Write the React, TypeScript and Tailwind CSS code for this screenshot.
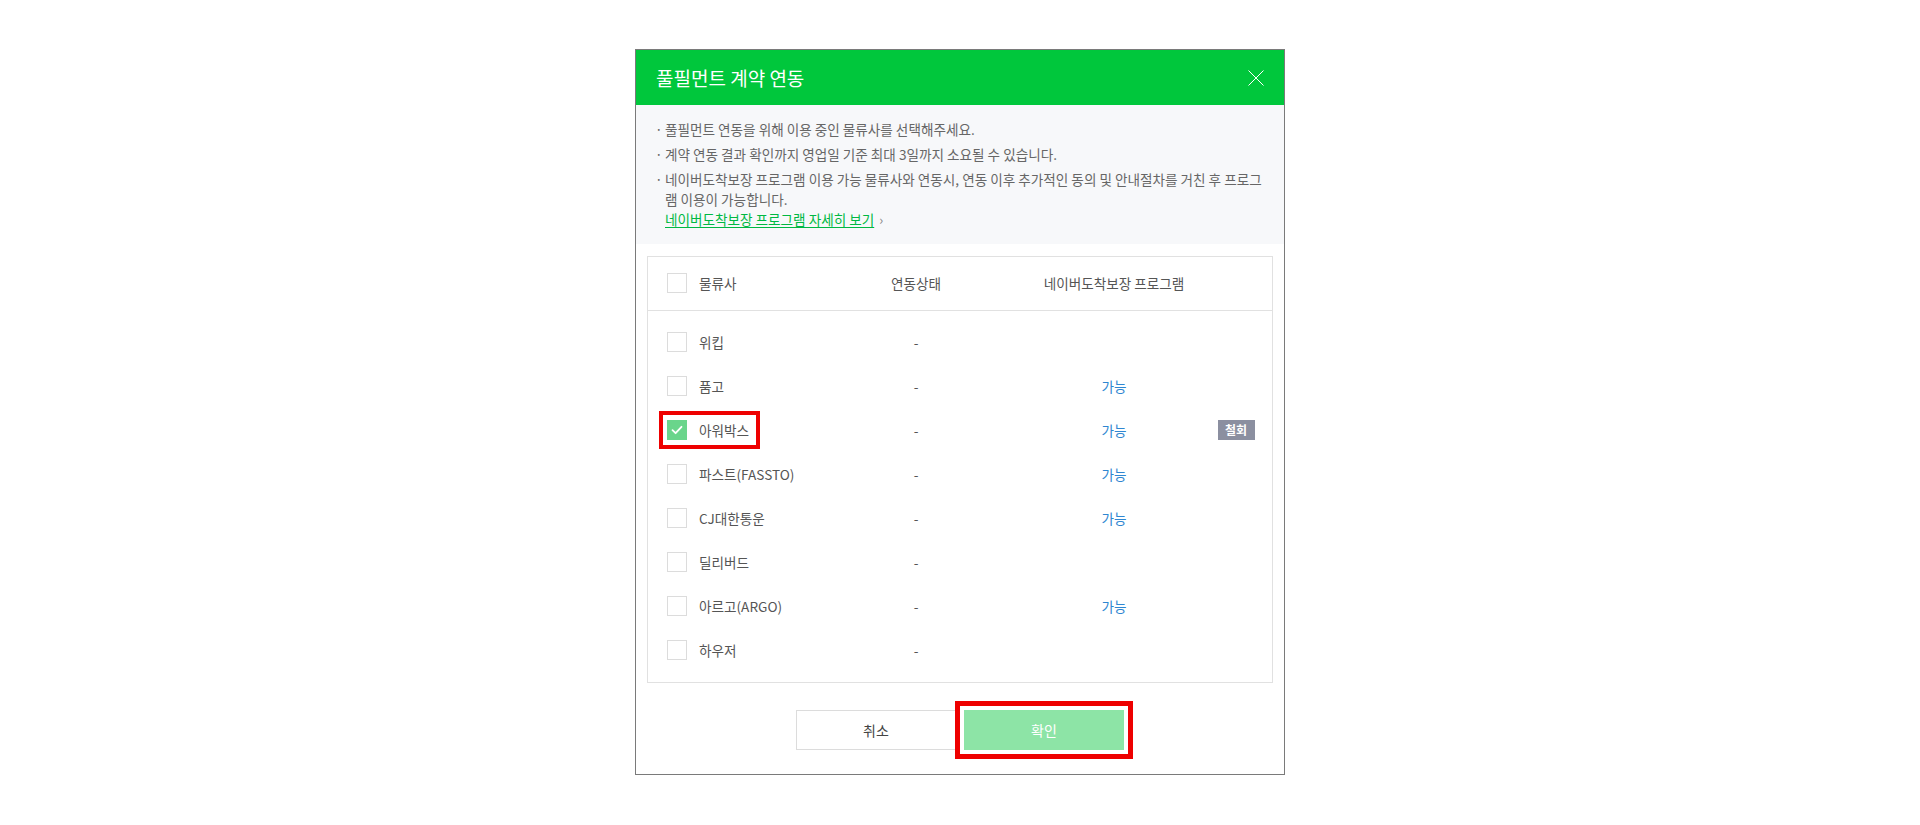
import React, { useState } from 'react';

type Carrier = {
  name: string;
  nda: boolean;
  withdraw?: boolean;
};

const carriers: Carrier[] = [
  { name: '위킵', nda: false },
  { name: '품고', nda: true },
  { name: '아워박스', nda: true, withdraw: true },
  { name: '파스트(FASSTO)', nda: true },
  { name: 'CJ대한통운', nda: true },
  { name: '딜리버드', nda: false },
  { name: '아르고(ARGO)', nda: true },
  { name: '하우저', nda: false },
];

const font = { fontFamily: '"Noto Sans CJK KR", "Noto Sans", sans-serif' };

const CheckBox: React.FC<{ checked: boolean; onClick?: () => void }> = ({ checked, onClick }) => (
  <button
    type="button"
    onClick={onClick}
    className={`w-5 h-5 shrink-0 flex items-center justify-center border ${
      checked ? 'bg-[#6ad58b] border-[#6ad58b]' : 'bg-white border-[#dcdcdc]'
    }`}
  >
    {checked && (
      <svg width="12" height="10" viewBox="0 0 12 10" fill="none">
        <path d="M1.5 5.2L4.6 8.2L10.5 1.8" stroke="white" strokeWidth="1.8" strokeLinecap="round" strokeLinejoin="round" />
      </svg>
    )}
  </button>
);

const App: React.FC = () => {
  const [selected, setSelected] = useState<string[]>(['아워박스']);

  const toggle = (name: string) =>
    setSelected(prev => (prev.includes(name) ? prev.filter(n => n !== name) : [...prev, name]));

  return (
    <div className="min-h-screen bg-white flex justify-center pt-[49px]" style={font}>
      <div className="w-[650px] h-[726px] border border-[#7a7a7a] bg-white flex flex-col">
        {/* Header */}
        <div className="h-[55px] shrink-0 bg-[#00c73c] flex items-center justify-between pl-[20px] pr-[20px]">
          <h2 className="text-[19px] leading-none text-white">풀필먼트 계약 연동</h2>
          <button type="button" className="w-4 h-4">
            <svg width="16" height="16" viewBox="0 0 16 16" fill="none">
              <path d="M0.5 0.5L15.5 15.5M15.5 0.5L0.5 15.5" stroke="white" strokeWidth="1" />
            </svg>
          </button>
        </div>

        {/* Notice */}
        <div className="bg-[#f7f8fa] pt-[14px] pb-[14px] pl-[19px] pr-[12px] text-[13.6px] leading-[20px] text-[#666]">
          <div className="flex">
            <span className="w-[10px] shrink-0">·</span>
            <p>풀필먼트 연동을 위해 이용 중인 물류사를 선택해주세요.</p>
          </div>
          <div className="flex mt-[5px]">
            <span className="w-[10px] shrink-0">·</span>
            <p>계약 연동 결과 확인까지 영업일 기준 최대 3일까지 소요될 수 있습니다.</p>
          </div>
          <div className="flex mt-[5px]">
            <span className="w-[10px] shrink-0">·</span>
            <div>
              <p className="whitespace-nowrap">
                네이버도착보장 프로그램 이용 가능 물류사와 연동시, 연동 이후 추가적인 동의 및 안내절차를 거친 후 프로그
                <br />
                램 이용이 가능합니다.
              </p>
              <a href="#" className="text-[#00b843] underline underline-offset-2">
                네이버도착보장 프로그램 자세히 보기
              </a>
              <span className="text-[#888] ml-[5px] text-[13px]">›</span>
            </div>
          </div>
        </div>

        {/* Table */}
        <div className="px-[11px] pt-[12px]">
          <div className="border border-[#e1e1e1] text-[13.6px] text-[#555]">
            <div className="h-[54px] border-b border-[#e1e1e1] grid grid-cols-[156px_224px_172px_1fr] items-center">
              <div className="flex items-center gap-3 pl-[19px]">
                <CheckBox checked={false} />
                <span>물류사</span>
              </div>
              <div className="text-center">연동상태</div>
              <div className="text-center">네이버도착보장 프로그램</div>
              <div />
            </div>
            <div className="pt-[9px] pb-[10px]">
              {carriers.map(c => {
                const checked = selected.includes(c.name);
                return (
                  <div key={c.name} className="h-[44px] grid grid-cols-[156px_224px_172px_1fr] items-center">
                    <div className="flex items-center gap-3 pl-[19px]">
                      <div className="relative flex items-center gap-3">
                        <CheckBox checked={checked} onClick={() => toggle(c.name)} />
                        <span className="text-[#555] whitespace-nowrap">{c.name}</span>
                        {c.withdraw && (
                          <span className="absolute -left-[8px] -top-[9px] w-[101px] h-[38px] border-[4px] border-[#ee0000] pointer-events-none" />
                        )}
                      </div>
                    </div>
                    <div className="text-center text-[#555]">-</div>
                    <div className="text-center text-[#2f86d1]">{c.nda ? '가능' : ''}</div>
                    <div className="flex justify-center">
                      {c.withdraw && (
                        <span className="w-[37px] h-[20px] bg-[#8b8fa0] text-white text-[12px] font-bold flex items-center justify-center">
                          철회
                        </span>
                      )}
                    </div>
                  </div>
                );
              })}
            </div>
          </div>
        </div>

        {/* Footer */}
        <div className="flex justify-center gap-2 pt-[27px]">
          <button
            type="button"
            className="w-[160px] h-[40px] bg-white border border-[#dcdcdc] text-[14px] text-[#444]"
          >
            취소
          </button>
          <div className="relative">
            <button
              type="button"
              className="w-[160px] h-[40px] bg-[#8de4a6] text-[14px] text-white"
            >
              확인
            </button>
            <span className="absolute -inset-[9px] border-[5px] border-[#ee0000] pointer-events-none" />
          </div>
        </div>
      </div>
    </div>
  );
};

export default App;
